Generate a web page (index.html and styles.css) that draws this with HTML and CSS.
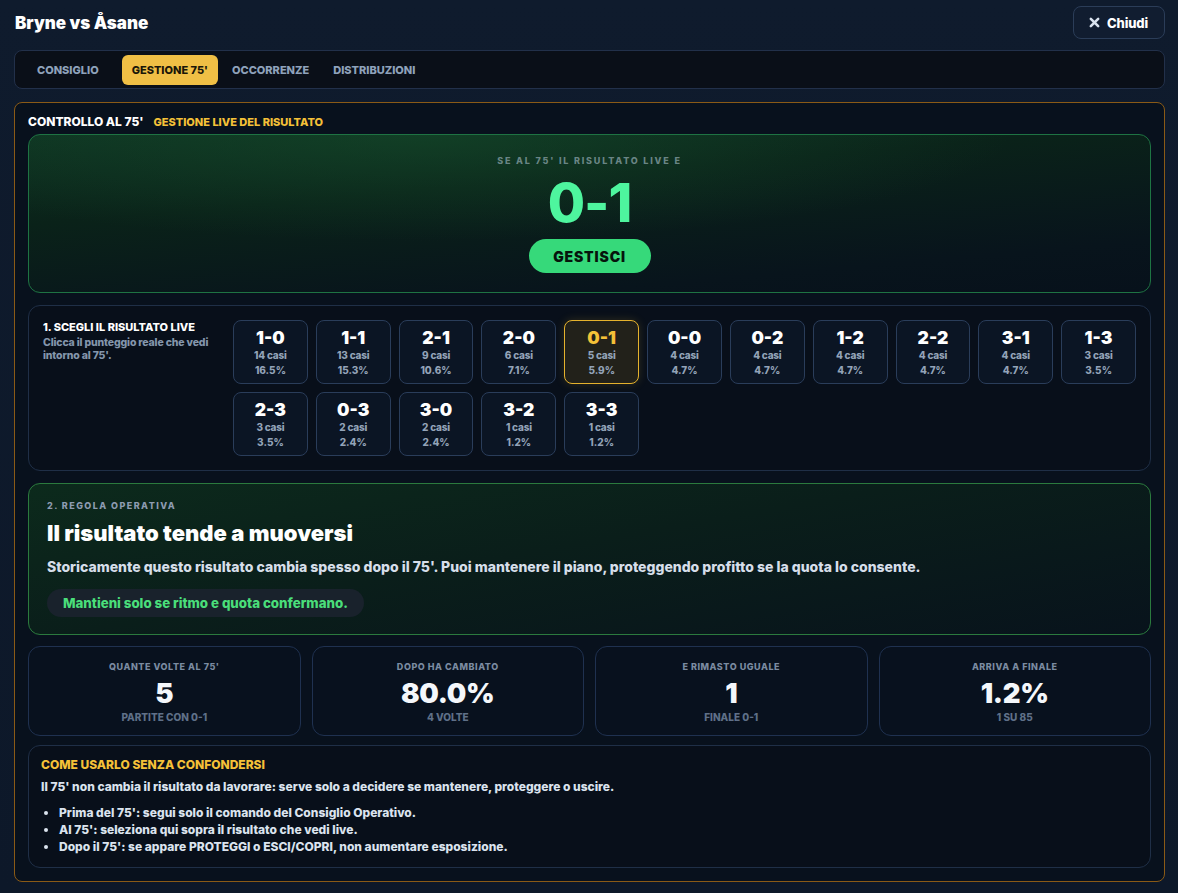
FILE: index.html
```html
<!DOCTYPE html>
<html lang="it">
<head>
<meta charset="utf-8">
<title>Bryne vs Åsane</title>
<link rel="stylesheet" href="styles.css">
</head>
<body>
  <header class="top">
    <h1 class="match-title">Bryne vs Åsane</h1>
    <button class="close-btn" type="button">
      <svg class="close-icon" viewBox="0 0 12 12" width="11" height="11" aria-hidden="true">
        <path d="M2 2 L10 10 M10 2 L2 10" stroke="currentColor" stroke-width="2.8" stroke-linecap="round"/>
      </svg>
      <span>Chiudi</span>
    </button>
  </header>

  <nav class="tabs">
    <span class="tab">Consiglio</span>
    <span class="tab active">Gestione 75'</span>
    <span class="tab">Occorrenze</span>
    <span class="tab">Distribuzioni</span>
  </nav>

  <main class="panel">
    <div class="panel-head">
      <span class="panel-title">Controllo al 75'</span>
      <span class="panel-sub">Gestione live del risultato</span>
    </div>

    <section class="hero">
      <div class="hero-label">Se al 75' il risultato live e</div>
      <div class="hero-score">0-1</div>
      <button class="hero-btn" type="button">Gestisci</button>
    </section>

    <section class="card picker">
      <div class="picker-intro">
        <div class="step-title">1. Scegli il risultato live</div>
        <p class="step-desc">Clicca il punteggio reale che vedi intorno al 75'.</p>
      </div>
      <div class="score-grid">
        <div class="score-tile"><b>1-0</b><span>14 casi</span><span>16.5%</span></div>
        <div class="score-tile"><b>1-1</b><span>13 casi</span><span>15.3%</span></div>
        <div class="score-tile"><b>2-1</b><span>9 casi</span><span>10.6%</span></div>
        <div class="score-tile"><b>2-0</b><span>6 casi</span><span>7.1%</span></div>
        <div class="score-tile selected"><b>0-1</b><span>5 casi</span><span>5.9%</span></div>
        <div class="score-tile"><b>0-0</b><span>4 casi</span><span>4.7%</span></div>
        <div class="score-tile"><b>0-2</b><span>4 casi</span><span>4.7%</span></div>
        <div class="score-tile"><b>1-2</b><span>4 casi</span><span>4.7%</span></div>
        <div class="score-tile"><b>2-2</b><span>4 casi</span><span>4.7%</span></div>
        <div class="score-tile"><b>3-1</b><span>4 casi</span><span>4.7%</span></div>
        <div class="score-tile"><b>1-3</b><span>3 casi</span><span>3.5%</span></div>
        <div class="score-tile"><b>2-3</b><span>3 casi</span><span>3.5%</span></div>
        <div class="score-tile"><b>0-3</b><span>2 casi</span><span>2.4%</span></div>
        <div class="score-tile"><b>3-0</b><span>2 casi</span><span>2.4%</span></div>
        <div class="score-tile"><b>3-2</b><span>1 casi</span><span>1.2%</span></div>
        <div class="score-tile"><b>3-3</b><span>1 casi</span><span>1.2%</span></div>
      </div>
    </section>

    <section class="rule">
      <div class="rule-label">2. Regola operativa</div>
      <h2 class="rule-title">Il risultato tende a muoversi</h2>
      <p class="rule-text">Storicamente questo risultato cambia spesso dopo il 75'. Puoi mantenere il piano, proteggendo profitto se la quota lo consente.</p>
      <div class="rule-pill">Mantieni solo se ritmo e quota confermano.</div>
    </section>

    <section class="stats">
      <div class="stat">
        <div class="stat-label">Quante volte al 75'</div>
        <div class="stat-value">5</div>
        <div class="stat-sub">Partite con 0-1</div>
      </div>
      <div class="stat">
        <div class="stat-label">Dopo ha cambiato</div>
        <div class="stat-value">80.0%</div>
        <div class="stat-sub">4 volte</div>
      </div>
      <div class="stat">
        <div class="stat-label">E rimasto uguale</div>
        <div class="stat-value">1</div>
        <div class="stat-sub">Finale 0-1</div>
      </div>
      <div class="stat">
        <div class="stat-label">Arriva a finale</div>
        <div class="stat-value">1.2%</div>
        <div class="stat-sub">1 su 85</div>
      </div>
    </section>

    <section class="card howto">
      <div class="howto-title">Come usarlo senza confondersi</div>
      <p class="howto-text">Il 75' non cambia il risultato da lavorare: serve solo a decidere se mantenere, proteggere o uscire.</p>
      <ul class="howto-list">
        <li>Prima del 75': segui solo il comando del Consiglio Operativo.</li>
        <li>Al 75': seleziona qui sopra il risultato che vedi live.</li>
        <li>Dopo il 75': se appare PROTEGGI o ESCI/COPRI, non aumentare esposizione.</li>
      </ul>
    </section>
  </main>
</body>
</html>
```

FILE: styles.css
```css
* {
  box-sizing: border-box;
}

html, body {
  height: 100%;
}

body {
  margin: 0;
  padding: 6px 13px 11px 14px;
  background: linear-gradient(180deg, #0f1b2d 0%, #0d1829 100%);
  color: #e9eef6;
  font-family: Inter, "Noto Sans", "Liberation Sans", sans-serif;
  font-weight: 800;
}

p, h1, h2, ul {
  margin: 0;
}

/* header */
.top {
  display: flex;
  align-items: center;
  justify-content: space-between;
  height: 33px;
}

.match-title {
  font-size: 17px;
  font-weight: 900;
  color: #ffffff;
  padding-left: 1px;
}

.close-btn {
  display: flex;
  align-items: center;
  gap: 7px;
  height: 33px;
  width: 92px;
  padding: 0 0 0 15px;
  background: #111d30;
  border: 1px solid #2b3d58;
  border-radius: 8px;
  color: #ffffff;
  font: inherit;
  font-size: 13px;
  font-weight: 800;
  letter-spacing: -0.01em;
}

.close-icon {
  color: #d9e2ee;
}

/* tabs */
.tabs {
  display: flex;
  align-items: center;
  gap: 4px;
  margin-top: 11px;
  height: 39px;
  padding: 0 12px;
  background: #0a0f18;
  border: 1px solid #22304a;
  border-radius: 8px;
}

.tab {
  display: flex;
  align-items: center;
  height: 30px;
  padding: 0 10px;
  border-radius: 6px;
  font-size: 11px;
  text-transform: uppercase;
  color: #8fa2bb;
}

.tab:first-child {
  margin-right: 9px;
}

.tab.active {
  background: #f0bf45;
  color: #1a1608;
}

/* main panel */
.panel {
  margin-top: 13px;
  padding: 12px 13px 13px;
  background: #08111d;
  border: 1px solid #8a5a16;
  border-radius: 8px;
}

.panel-head {
  display: flex;
  align-items: baseline;
  gap: 10px;
  height: 14px;
  line-height: 14px;
  margin-bottom: 5px;
  text-transform: uppercase;
}

.panel-title {
  font-size: 12px;
  color: #ffffff;
}

.panel-sub {
  font-size: 11px;
  color: #f5c138;
}

/* hero */
.hero {
  display: flex;
  flex-direction: column;
  align-items: center;
  padding: 19px 0 19px;
  border: 1px solid #1e7343;
  border-radius: 12px;
  background:
    radial-gradient(ellipse 70% 90% at 35% 0%, rgba(22, 78, 44, 0.55), rgba(22, 78, 44, 0) 75%),
    linear-gradient(175deg, #0e3322 0%, #0a2219 35%, #08141c 80%, #07111b 100%);
}

.hero-label {
  font-size: 9px;
  line-height: 14px;
  letter-spacing: 0.2em;
  text-transform: uppercase;
  color: #6a8585;
}

.hero-score {
  margin-top: 9px;
  font-size: 54px;
  line-height: 52px;
  color: #4ef59e;
  letter-spacing: -0.02em;
}

.hero-btn {
  margin-top: 10px;
  height: 34px;
  width: 122px;
  border: none;
  border-radius: 17px;
  background: #36d97a;
  color: #06140c;
  font: inherit;
  font-size: 14px;
  font-weight: 900;
  letter-spacing: 0.06em;
  text-transform: uppercase;
}

/* generic card */
.card {
  border: 1px solid #1f2f47;
  border-radius: 12px;
  background: #080f1a;
}

/* score picker */
.picker {
  display: flex;
  gap: 14px;
  margin-top: 12px;
  padding: 14px;
}

.picker-intro {
  flex: 0 0 176px;
}

.step-title {
  font-size: 11px;
  line-height: 15px;
  color: #ffffff;
  text-transform: uppercase;
}

.step-desc {
  margin-top: 1px;
  font-size: 10.5px;
  line-height: 13px;
  color: #8496ac;
  letter-spacing: -0.015em;
}

.score-grid {
  flex: 1;
  display: grid;
  grid-template-columns: repeat(11, 1fr);
  grid-auto-rows: 64px;
  gap: 8px;
}

.score-tile {
  display: flex;
  flex-direction: column;
  align-items: center;
  padding-top: 7px;
  border: 1px solid #2a3d5a;
  border-radius: 8px;
  background: #0b1524;
}

.score-tile b {
  font-size: 17.5px;
  line-height: 20px;
  font-weight: 900;
  color: #ffffff;
}

.score-tile span {
  font-size: 10px;
  line-height: 15px;
  color: #93a3b8;
  letter-spacing: -0.02em;
}

.score-tile span + span {
  line-height: 14px;
  letter-spacing: 0;
}

.score-tile.selected {
  border-color: #e5b22d;
  background: #22211a;
  box-shadow: 0 0 10px rgba(229, 178, 45, 0.18);
}

.score-tile.selected b {
  color: #f5c138;
}

/* operating rule */
.rule {
  margin-top: 12px;
  padding: 16px 18px 17px;
  border: 1px solid #2b7a3e;
  border-radius: 12px;
  background: linear-gradient(170deg, #0c2a1c 0%, #0a1e1a 45%, #08131c 100%);
}

.rule-label {
  font-size: 9px;
  line-height: 12px;
  letter-spacing: 0.16em;
  text-transform: uppercase;
  color: #8d9bb0;
}

.rule-title {
  margin-top: 8px;
  font-size: 22px;
  line-height: 26px;
  font-weight: 900;
  color: #ffffff;
}

.rule-text {
  margin-top: 12px;
  font-size: 14px;
  line-height: 18px;
  color: #d6dee9;
}

.rule-pill {
  display: inline-flex;
  align-items: center;
  margin-top: 13px;
  height: 28px;
  padding: 0 16px;
  border-radius: 14px;
  background: #19222c;
  color: #4ade7a;
  font-size: 13.3px;
}

/* stats */
.stats {
  display: grid;
  grid-template-columns: repeat(4, 1fr);
  gap: 11px;
  margin-top: 11px;
}

.stat {
  display: flex;
  flex-direction: column;
  align-items: center;
  height: 90px;
  padding-top: 14px;
  border: 1px solid #1f3150;
  border-radius: 12px;
  background: #08111e;
}

.stat-label {
  font-size: 9px;
  line-height: 12px;
  letter-spacing: 0.06em;
  text-transform: uppercase;
  color: #7b8ba1;
}

.stat-value {
  margin-top: 5px;
  font-size: 27.5px;
  line-height: 30px;
  font-weight: 900;
  color: #f4f7fb;
  letter-spacing: -0.01em;
}

.stat-sub {
  margin-top: 3px;
  font-size: 10px;
  line-height: 12px;
  text-transform: uppercase;
  color: #5f7088;
}

/* how-to */
.howto {
  margin-top: 9px;
  padding: 12px 12px 12px;
}

.howto-title {
  font-size: 12px;
  line-height: 14px;
  text-transform: uppercase;
  color: #f5c138;
}

.howto-text {
  margin-top: 7px;
  font-size: 12px;
  line-height: 16px;
  color: #dbe3ee;
}

.howto-list {
  margin-top: 9px;
  padding-left: 18px;
  font-size: 12px;
  line-height: 17px;
  color: #dbe3ee;
}
```
